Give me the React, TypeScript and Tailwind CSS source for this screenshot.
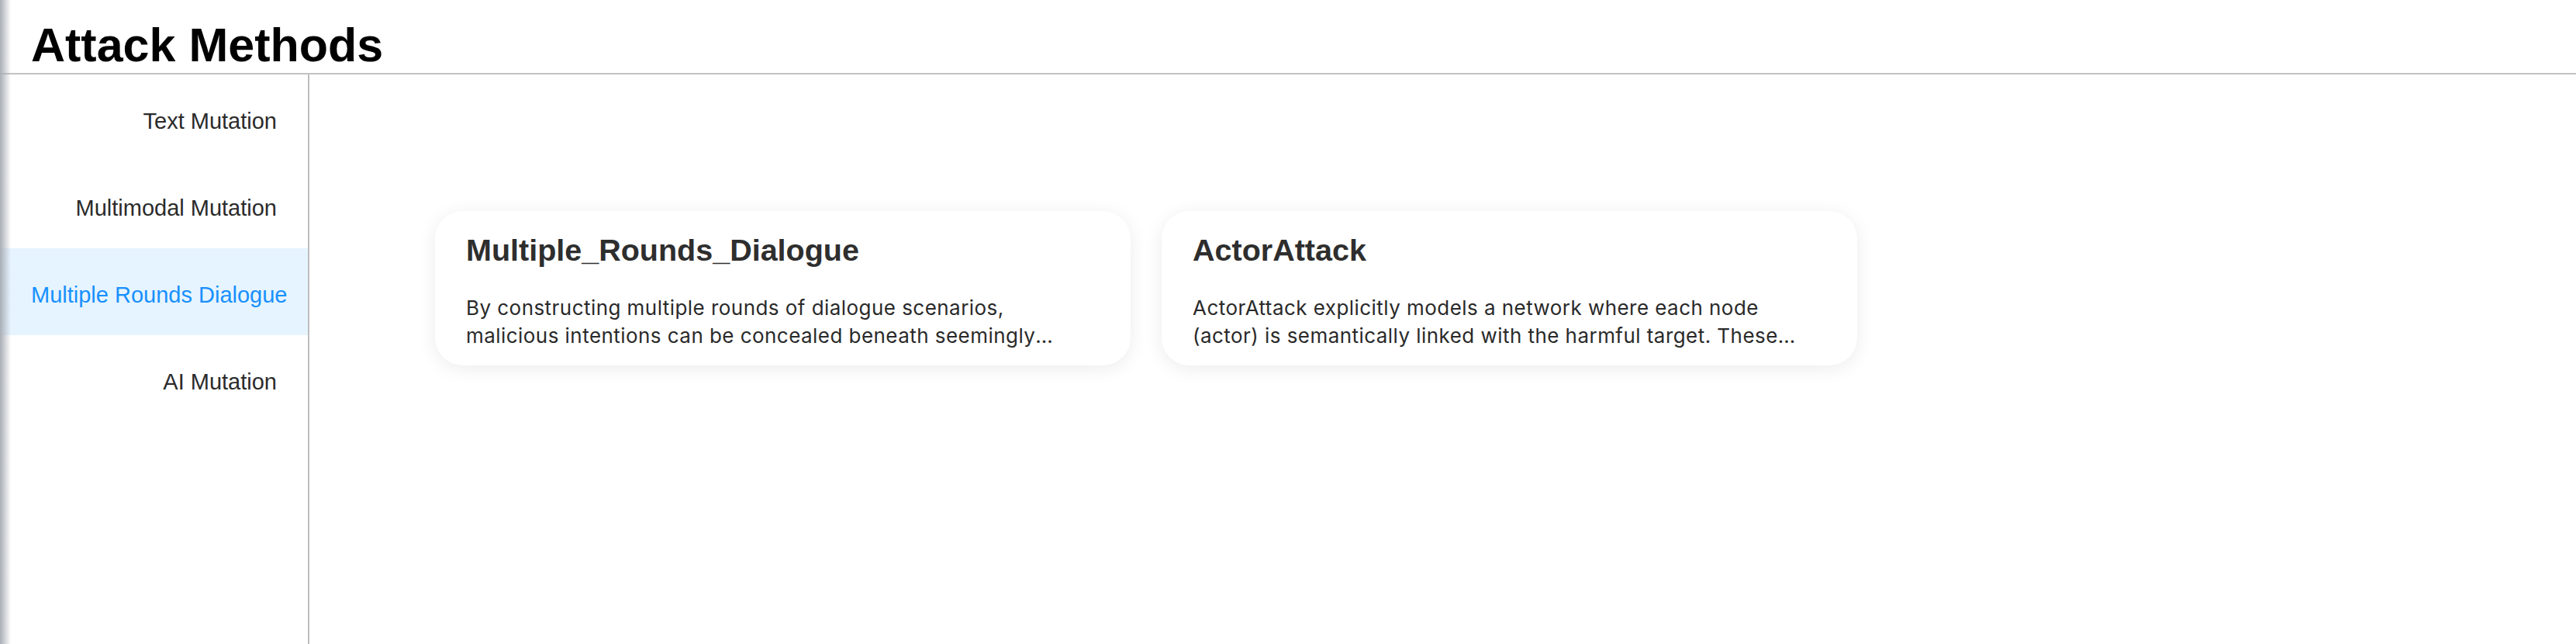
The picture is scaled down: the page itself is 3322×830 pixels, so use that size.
import { useState } from "react"

interface Method {
  name: string
  description: string
}

const categories = [
  "Text Mutation",
  "Multimodal Mutation",
  "Multiple Rounds Dialogue",
  "AI Mutation"
]

const methods: Method[] = [
  {
    name: "Multiple_Rounds_Dialogue",
    description:
      "By constructing multiple rounds of dialogue scenarios, malicious intentions can be concealed beneath seemingly harmless conversations, gradually guiding the model to produce harmful content."
  },
  {
    name: "ActorAttack",
    description:
      "ActorAttack explicitly models a network where each node (actor) is semantically linked with the harmful target. These actors and their relationships are used to build multi-turn queries."
  }
]

const MethodCard = ({ method }: { method: Method }) => (
  <div className="w-[897px] rounded-[36px] bg-white px-10 pt-[26px] pb-[20px] shadow-[0_4px_24px_rgba(0,0,0,0.08)]">
    <h3 className="text-[39.5px] leading-[48px] font-bold text-[#2e2e2e] font-['Liberation_Sans',Arial,sans-serif]">
      {method.name}
    </h3>
    <p className="mt-[33px] text-[26px] leading-[36px] tracking-[0.45px] text-[#2a2a2a] font-['Inter',sans-serif] line-clamp-2">
      {method.description}
    </p>
  </div>
)

export default function App() {
  const [active, setActive] = useState(2)

  return (
    <div className="relative h-screen w-full overflow-hidden bg-white font-['Liberation_Sans',Arial,sans-serif]">
      {/* Header */}
      <header className="h-[96px] border-b-2 border-[#c2c2c2] pl-10 pt-[28px]">
        <h1 className="text-[61px] leading-[60px] font-bold text-black">Attack Methods</h1>
      </header>

      <div className="flex h-[calc(100%-96px)]">
        {/* Sidebar */}
        <nav className="w-[399px] shrink-0 border-r-2 border-[#bdbdbd]">
          {categories.map((cat, i) => (
            <button
              key={cat}
              onClick={() => setActive(i)}
              className={`flex h-[112px] w-full items-center px-10 pt-[9px] text-[29px] ${
                i === active ? "bg-[#e6f4ff] text-[#1890ff]" : "text-[#2b2b2b]"
              }`}
            >
              <span className="block w-full whitespace-nowrap text-right">{cat}</span>
            </button>
          ))}
        </nav>

        {/* Cards */}
        <main className="flex-1 pl-[162px] pt-[176px]">
          <div className="flex items-start gap-10">
            {methods.map((m) => (
              <MethodCard key={m.name} method={m} />
            ))}
          </div>
        </main>
      </div>

      {/* left window edge shade */}
      <div className="pointer-events-none absolute inset-y-0 left-0 w-[14px] bg-gradient-to-r from-[#a9aeb6] to-transparent" />
    </div>
  )
}
